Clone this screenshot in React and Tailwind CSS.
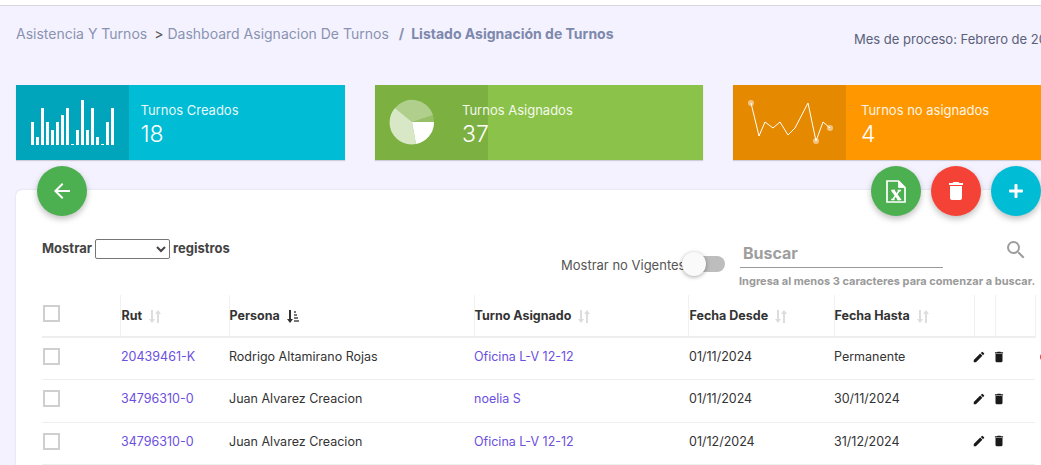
import { FaPlus } from "react-icons/fa";
import { MdArrowBack, MdDelete, MdEdit, MdSearch } from "react-icons/md";

const BARS = [23, 8, 37, 23, 15, 23, 30, 37, 1, 15, 45, 15, 37, 8, 1, 23, 37];
const LINE = [[18, 18], [26, 51], [32, 37], [40, 43], [47, 37], [55, 50], [62, 43], [75, 18], [83, 56], [90, 37], [97, 43]];

const ROWS = [
  { rut: "20439461-K", persona: "Rodrigo Altamirano Rojas", turno: "Oficina L-V 12-12", desde: "01/11/2024", hasta: "Permanente", extra: true },
  { rut: "34796310-0", persona: "Juan Alvarez Creacion", turno: "noelia S", desde: "01/11/2024", hasta: "30/11/2024" },
  { rut: "34796310-0", persona: "Juan Alvarez Creacion", turno: "Oficina L-V 12-12", desde: "01/12/2024", hasta: "31/12/2024" },
];

function BarsIcon() {
  return (
    <svg width="113" height="75" viewBox="0 0 113 75">
      {BARS.map((h, i) => (
        <rect key={i} x={15 + i * 5} y={60 - h} width="3" height={h} fill="#fff" />
      ))}
    </svg>
  );
}

function PieIcon() {
  return (
    <svg width="113" height="75" viewBox="0 0 113 75">
      <g transform="translate(37 37)">
        <path d="M0 0 L22 0 A22 22 0 0 1 4 22 Z" fill="#fff" />
        <path d="M0 0 L4 22 A22 22 0 0 1 -17 -14 Z" fill="#fff" fillOpacity="0.7" />
        <path d="M0 0 L-17 -14 A22 22 0 0 1 21 -7 Z" fill="#fff" fillOpacity="0.4" />
        <path d="M0 0 L21 -7 A22 22 0 0 1 22 0 Z" fill="#fff" fillOpacity="0.2" />
      </g>
    </svg>
  );
}

function LineIcon() {
  return (
    <svg width="113" height="75" viewBox="0 0 113 75">
      <polyline points={LINE.map((p) => p.join(",")).join(" ")} fill="none" stroke="#fff" strokeWidth="1" />
      <circle cx="18" cy="18" r="3" fill="#fff" fillOpacity="0.5" />
      <circle cx="83" cy="56" r="3" fill="#fff" fillOpacity="0.5" />
      <circle cx="97" cy="43" r="3" fill="#fff" fillOpacity="0.5" />
    </svg>
  );
}

function ExcelIcon() {
  return (
    <svg width="20" height="23" viewBox="0 0 20 23" fill="none" stroke="#fff">
      <path d="M1 1 H12.5 L19 7.5 V22 H1 Z" strokeWidth="1.7" />
      <path d="M12.5 1 V7.5 H19 Z" fill="#fff" strokeWidth="0.8" />
      <path d="M6.8 10.5 L13.4 19.5" strokeWidth="3" />
      <path d="M13.4 10.5 L6.8 19.5" strokeWidth="1.5" />
      <path d="M5.2 10.5 H9 M11.6 10.5 H15 M5.2 19.5 H8.6 M11.4 19.5 H15.2" strokeWidth="1.3" />
    </svg>
  );
}

function SortIcon() {
  return (
    <svg width="12" height="13" viewBox="0 0 12 13" fill="#dddddd">
      <path d="M2 0 H4 V9 H6 L3 13 L0 9 H2 Z" />
      <path d="M8 13 H10 V4 H12 L9 0 L6.5 3.3 V4 H8 Z" />
    </svg>
  );
}

function SortedIcon() {
  return (
    <svg width="12" height="13" viewBox="0 0 12 13">
      <path d="M2 0 H4 V9 H6 L3 13 L0 9 H2 Z" fill="#333333" />
      <path d="M7 1 H9 V3 H7 Z M7 4 H10 V6 H7 Z M7 7 H11 V9 H7 Z M7 10 H12 V12 H7 Z" fill="#777777" />
    </svg>
  );
}

function StatCard({ icon, iconBg, bg, label, value, textClass }) {
  return (
    <div className={`relative flex h-[75px] w-[328.67px] shrink-0 shadow-[0_1px_1px_rgba(0,0,0,0.15)] ${bg}`}>
      <div className={`h-full w-[113px] shrink-0 ${iconBg}`}>{icon}</div>
      <div className={`absolute top-[16px] text-white ${textClass}`}>
        <div className="text-[13px] leading-[18px] opacity-90">{label}</div>
        <div className="mt-[1px] text-[23px] font-light leading-[28px]">{value}</div>
      </div>
    </div>
  );
}

function Fab({ bg, className, children }) {
  return (
    <button
      type="button"
      className={`absolute top-[-24px] flex h-[50px] w-[50px] items-center justify-center rounded-full text-white shadow-[0_3px_6px_rgba(0,0,0,0.25)] ${bg} ${className}`}
    >
      {children}
    </button>
  );
}

function Checkbox() {
  return <div className="h-[17px] w-[17px] border-2 border-[#cfcfcf] bg-white" />;
}

function HeaderCell({ children, sorted, inset }) {
  return (
    <th className="h-[42px] border-b-2 border-l border-[#eeeeee] border-l-[#f1f1f1] p-0 pt-[2px] text-left align-middle text-[12.5px] font-bold text-[#333]">
      <span className={`flex items-center gap-[7px] ${inset ? "pl-[1px]" : ""}`}>
        {children}
        {sorted ? <SortedIcon /> : <SortIcon />}
      </span>
    </th>
  );
}

export default function App() {
  return (
    <div className="h-[465px] w-[1041px] overflow-hidden bg-white font-['Inter',sans-serif]">
      <div className="mt-[5px] h-[460px] border-t border-[#d9d7e2] bg-[#f4f2fe] pl-[16px]">
        <div className="flex h-[79px] items-start">
          <div className="flex w-[838px] shrink-0 items-center whitespace-nowrap pt-[19px] text-[14px] leading-[18px] text-[#8a92b2]">
            <span>Asistencia Y Turnos</span>
            <span className="ml-[7px] text-[#555]">&gt;</span>
            <span className="ml-[4px]">Dashboard Asignacion De Turnos</span>
            <span className="ml-[10px] font-bold">/</span>
            <span className="ml-[7px] font-bold text-[#7d88ad]">Listado Asignación de Turnos</span>
          </div>
          <div className="whitespace-nowrap pt-[24px] text-[13px] leading-[18px] text-[#59617a]">Mes de proceso: Febrero de 2025</div>
        </div>

        <div className="flex gap-[30px]">
          <StatCard icon={<BarsIcon />} iconBg="bg-[#00a5bb]" bg="bg-[#00bcd4]" label="Turnos Creados" value="18" textClass="left-[124.5px]" />
          <StatCard icon={<PieIcon />} iconBg="bg-[#7cb041]" bg="bg-[#8bc34a]" label="Turnos Asignados" value="37" textClass="left-[87.33px]" />
          <StatCard icon={<LineIcon />} iconBg="bg-[#e58900]" bg="bg-[#ff9800]" label="Turnos no asignados" value="4" textClass="left-[127.67px]" />
        </div>

        <div className="relative mt-[30px] h-[300px] w-[1060px] rounded-t-[6px] bg-white px-[26px] pt-[49px] shadow-[0_0_2px_rgba(80,70,140,0.2)]">
          <Fab bg="bg-[#4caf50]" className="left-[21px]"><MdArrowBack className="h-[24px] w-[24px]" /></Fab>
          <Fab bg="bg-[#4caf50]" className="left-[855px]"><ExcelIcon /></Fab>
          <Fab bg="bg-[#f44336]" className="left-[915px]"><MdDelete className="h-[24px] w-[24px]" /></Fab>
          <Fab bg="bg-[#00bcd4]" className="left-[975px]"><FaPlus className="h-[16px] w-[16px]" /></Fab>

          <div className="flex h-[56px] w-[994px] items-start">
            <div className="flex w-[519px] shrink-0 items-center gap-[3px] text-[13px] font-bold text-[#444]">
              <span>Mostrar</span>
              <select className="h-[20px] w-[75px] rounded-[2px] border border-[#767676] bg-white" />
              <span>registros</span>
            </div>
            <div className="relative flex w-[179px] shrink-0 pt-[18px] text-[13px] leading-[16px] text-[#555]">
              <span className="whitespace-nowrap">Mostrar no Vigentes</span>
              <div className="absolute left-[132px] top-[17px] h-[16px] w-[32px] rounded-full bg-[#bdbdbd]">
                <div className="absolute left-[-11px] top-[-4px] h-[24px] w-[24px] rounded-full bg-[#fafafa] shadow-[0_1px_4px_rgba(0,0,0,0.35)]" />
              </div>
            </div>
            <div className="relative w-[296px] shrink-0">
              <div className="flex h-[29px] w-[203px] items-center border-b border-[#9a9a9a] pl-[3px] text-[16px] font-bold text-[#9e9e9e]">
                Buscar
              </div>
              <MdSearch className="absolute left-[264px] top-[-1px] h-[24px] w-[24px] text-[#9e9e9e]" />
              <div className="-ml-[1px] mt-[6px] whitespace-nowrap text-[11px] font-bold leading-[14px] text-[#9a9a9a]">
                Ingresa al menos 3 caracteres para comenzar a buscar.
              </div>
            </div>
          </div>

          <table className="w-[993px] table-fixed border-collapse">
            <colgroup>
              <col className="w-[78px]" />
              <col className="w-[109px]" />
              <col className="w-[245px]" />
              <col className="w-[214px]" />
              <col className="w-[146px]" />
              <col className="w-[140px]" />
              <col className="w-[21px]" />
              <col className="w-[40px]" />
            </colgroup>
            <thead>
              <tr>
                <th className="h-[42px] border-b-2 border-[#eeeeee] p-0 pb-[4px] pl-[1px] text-left align-middle">
                  <Checkbox />
                </th>
                <HeaderCell inset>Rut</HeaderCell>
                <HeaderCell sorted>Persona</HeaderCell>
                <HeaderCell>Turno Asignado</HeaderCell>
                <HeaderCell inset>Fecha Desde</HeaderCell>
                <HeaderCell>Fecha Hasta</HeaderCell>
                <th className="border-b-2 border-l border-[#eeeeee] border-l-[#f1f1f1] p-0" />
                <th className="border-x border-b-2 border-[#eeeeee] border-x-[#f1f1f1] p-0" />
              </tr>
            </thead>
            <tbody>
              {ROWS.map((row, i) => (
                <tr key={i} className="h-[42.5px] border-b border-[#eeeeee] text-[12.5px] text-[#333]">
                  <td className="p-0 pb-[4px] pl-[1px]"><Checkbox /></td>
                  <td className="p-0 pb-[2px] pl-[1px] text-[#6c4fe0]">{row.rut}</td>
                  <td className="p-0 pb-[2px]">{row.persona}</td>
                  <td className="p-0 pb-[2px] text-[#6c4fe0]">{row.turno}</td>
                  <td className="p-0 pb-[2px] pl-[1px]">{row.desde}</td>
                  <td className="p-0 pb-[2px]">{row.hasta}</td>
                  <td className="p-0 pb-[4px]" colSpan={2}>
                    <div className="-ml-[2px] flex items-center gap-[6px] text-[#1a1a1a]">
                      <MdEdit className="h-[14px] w-[14px] shrink-0" />
                      <MdDelete className="h-[14px] w-[14px] shrink-0" />
                      {row.extra && <div className="ml-[28px] h-[10px] w-[10px] shrink-0 rounded-full bg-[#e53935]" />}
                    </div>
                  </td>
                </tr>
              ))}
            </tbody>
          </table>
        </div>
      </div>
    </div>
  );
}
